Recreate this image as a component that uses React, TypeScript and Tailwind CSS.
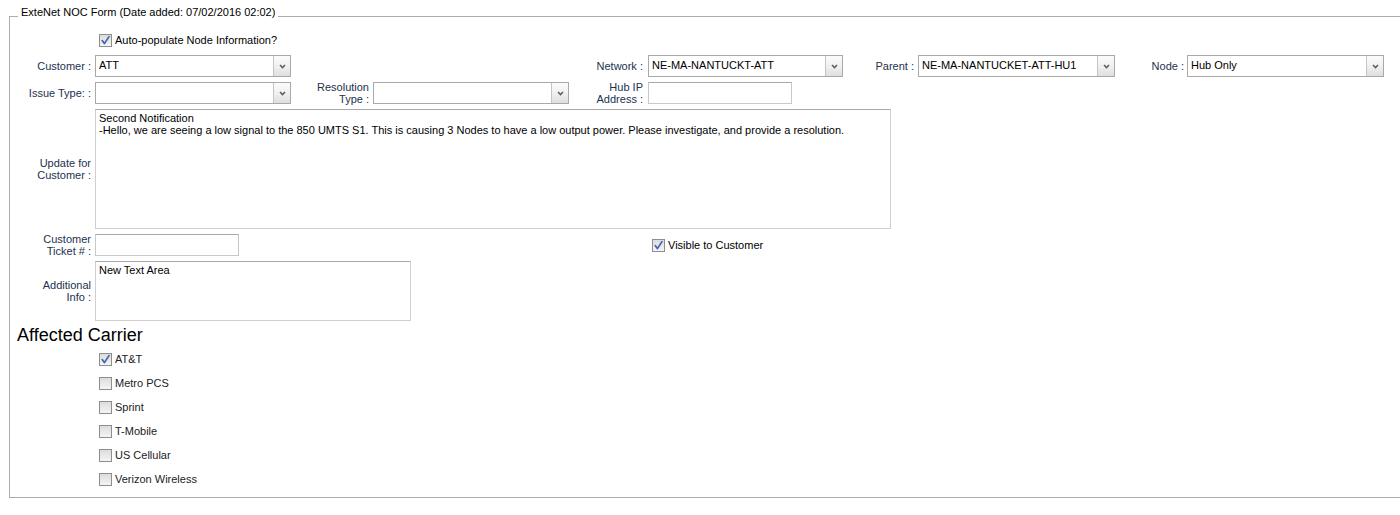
import clsx from 'clsx';

const labelCls = 'text-right text-[11px] leading-[12px] text-[#1c324f]';

function Check({ checked }: { checked?: boolean }) {
  return (
    <span className="relative inline-flex h-[13px] w-[13px] shrink-0 border border-[#8e8e8e] bg-gradient-to-b from-[#dcdcdc] to-[#f4f4f4]">
      {checked && (
        <svg className="absolute left-0 top-0" width="11" height="11" viewBox="0 0 11 11">
          <path d="M2.2 5.6 L4.4 8.6 L9 1.6" stroke="#3a64b4" strokeWidth="1.7" fill="none" strokeLinecap="round" strokeLinejoin="round" />
        </svg>
      )}
    </span>
  );
}

function Select({ value, className }: { value?: string; className?: string }) {
  return (
    <div className={clsx('flex h-[22px] shrink-0 border border-[#a9a9a9] bg-white', className)}>
      <div className="flex-1 truncate pl-[3px] pt-[2px] text-[11px] leading-[14px] text-black">{value}</div>
      <div className="flex w-[17px] items-center justify-center border-l border-[#c4c4c4] bg-gradient-to-b from-[#fbfbfb] via-[#f1f1f1] to-[#dedede]">
        <svg width="7" height="5" viewBox="0 0 7 5">
          <path d="M1 1 L3.5 3.6 L6 1" stroke="#5c5c5c" strokeWidth="1.5" fill="none" />
        </svg>
      </div>
    </div>
  );
}

function TextInput({ className }: { className?: string }) {
  return <div className={clsx('h-[22px] shrink-0 border border-[#c9c9c9] border-t-[#a9a9a9] bg-white', className)} />;
}

const carriers = [
  { name: 'AT&T', checked: true },
  { name: 'Metro PCS' },
  { name: 'Sprint' },
  { name: 'T-Mobile' },
  { name: 'US Cellular' },
  { name: 'Verizon Wireless' },
];

export default function App() {
  return (
    <div className="h-[515px] w-[1400px] overflow-hidden bg-white font-['Liberation_Sans',Arial,sans-serif] text-[11px] text-black">
      <fieldset className="ml-[9px] mt-[6px] w-[1420px] border border-[#acacac] p-0">
        <legend className="ml-[8px] px-[3px] pb-[7px] text-[11px] leading-[13px] text-black">
          ExteNet NOC Form (Date added: 07/02/2016 02:02)
        </legend>

        {/* Auto-populate */}
        <div className="mt-[8px] flex h-[13px] items-center pl-[89px]">
          <Check checked />
          <span className="ml-[3px] leading-[13px]">Auto-populate Node Information?</span>
        </div>

        {/* Row 1 */}
        <div className="mt-[8px] flex h-[22px] items-center">
          <div className={clsx(labelCls, 'w-[81px]')}>Customer :</div>
          <Select value="ATT" className="ml-[4px] w-[196px]" />
          <div className={clsx(labelCls, 'w-[352px]')}>Network :</div>
          <Select value="NE-MA-NANTUCKT-ATT" className="ml-[5px] w-[195px]" />
          <div className={clsx(labelCls, 'w-[71px]')}>Parent :</div>
          <Select value="NE-MA-NANTUCKET-ATT-HU1" className="ml-[4px] w-[197px]" />
          <div className={clsx(labelCls, 'w-[69px]')}>Node :</div>
          <Select value="Hub Only" className="ml-[3px] w-[197px]" />
        </div>

        {/* Row 2 */}
        <div className="mt-[5px] flex h-[22px] items-center">
          <div className={clsx(labelCls, 'w-[81px]')}>Issue Type: :</div>
          <Select className="ml-[4px] w-[196px]" />
          <div className={clsx(labelCls, 'w-[78px]')}>
            Resolution
            <br />
            Type :
          </div>
          <Select className="ml-[4px] w-[196px]" />
          <div className={clsx(labelCls, 'w-[74px]')}>
            Hub IP
            <br />
            Address :
          </div>
          <TextInput className="ml-[5px] w-[144px]" />
        </div>

        {/* Update for customer */}
        <div className="mt-[5px] flex h-[120px] items-center">
          <div className={clsx(labelCls, 'w-[81px]')}>
            Update for
            <br />
            Customer :
          </div>
          <div className="ml-[4px] h-[120px] w-[796px] border border-[#cfcfcf] border-t-[#a9a9a9] bg-white px-[3px] pt-[2px] text-[11px] leading-[12px] text-black">
            Second Notification
            <br />
            -Hello, we are seeing a low signal to the 850 UMTS S1. This is causing 3 Nodes to have a low output power. Please investigate, and provide a resolution.
          </div>
        </div>

        {/* Ticket */}
        <div className="mt-[5px] flex h-[22px] items-center">
          <div className={clsx(labelCls, 'w-[81px]')}>
            Customer
            <br />
            Ticket # :
          </div>
          <TextInput className="ml-[4px] w-[144px]" />
          <div className="ml-[413px] flex items-center">
            <Check checked />
            <span className="ml-[3px] leading-[13px]">Visible to Customer</span>
          </div>
        </div>

        {/* Additional info */}
        <div className="mt-[5px] flex h-[60px] items-center">
          <div className={clsx(labelCls, 'w-[81px]')}>
            Additional
            <br />
            Info :
          </div>
          <div className="ml-[4px] h-[60px] w-[316px] border border-[#cfcfcf] border-t-[#a9a9a9] bg-white px-[3px] pt-[2px] text-[11px] leading-[12px] text-black">
            New Text Area
          </div>
        </div>

        <h2 className="ml-[7px] mt-[4px] text-[18px] leading-[21px] text-black">Affected Carrier</h2>

        <div className="flex flex-col gap-[11px] pb-[11px] pl-[89px] pt-[7px]">
          {carriers.map((c) => (
            <div key={c.name} className="flex h-[13px] items-center">
              <Check checked={c.checked} />
              <span className="ml-[3px] leading-[13px] text-[#222]">{c.name}</span>
            </div>
          ))}
        </div>
      </fieldset>
    </div>
  );
}
